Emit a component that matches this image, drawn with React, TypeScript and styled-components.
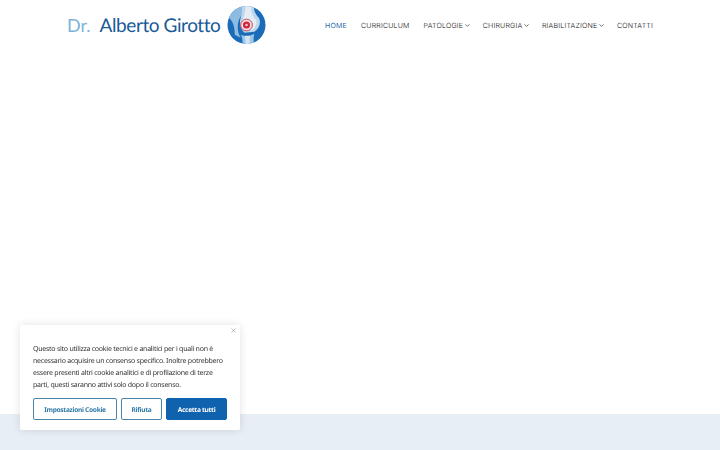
import React from "react";
import styled, { createGlobalStyle } from "styled-components";
import { ChevronDown, X } from "lucide-react";

const Global = createGlobalStyle`
  html, body {
    margin: 0;
    height: 100%;
    background: #fff;
  }
  body {
    font-family: "Noto Sans", sans-serif;
    text-rendering: geometricPrecision;
    overflow: hidden;
  }
`;

const Page = styled.div`
  display: flex;
  flex-direction: column;
  height: 450px;
`;

const Header = styled.header`
  display: flex;
  align-items: center;
  justify-content: space-between;
  height: 50px;
  padding: 0 66px 0 67px;
`;

const Logo = styled.a`
  display: flex;
  align-items: center;
  text-decoration: none;
  font-family: Lato, sans-serif;
  white-space: nowrap;
`;

const LogoDr = styled.span`
  font-size: 18px;
  color: #7db2d8;
  margin-right: 9px;
`;

const LogoName = styled.span`
  font-size: 19px;
  letter-spacing: -0.42px;
  color: #1a5a98;
  margin-right: 7px;
`;

const Nav = styled.nav`
  display: flex;
  align-items: center;
  gap: 12px;
  font-family: Inter, sans-serif;
`;

const NavItem = styled.a<{ active?: boolean }>`
  display: flex;
  align-items: center;
  padding: 0 1px;
  font-size: 7px;
  font-weight: ${(props) => (props.active ? 400 : 300)};
  letter-spacing: 0.2px;
  color: ${(props) => (props.active ? "#1f6ca8" : "#111")};
  white-space: nowrap;
`;

const Caret = styled(ChevronDown)`
  margin: 0 -2.5px 0 1px;
`;

const Spacer = styled.main`
  flex: 1;
`;

const Footer = styled.footer`
  height: 36px;
  background: #e8eef5;
`;

const CookieBox = styled.div`
  position: fixed;
  left: 20px;
  top: 325px;
  width: 220px;
  height: 105px;
  box-sizing: border-box;
  padding: 17px 13px 0;
  background: #fff;
  border-radius: 2px;
  box-shadow: 0 0 8px rgba(0, 0, 0, 0.12);
`;

const Close = styled.span`
  position: absolute;
  top: 2px;
  right: 3px;
  display: flex;
  color: #999;
`;

const CookieText = styled.p`
  margin: 2px 0 0;
  font-size: 7px;
  letter-spacing: -0.25px;
  line-height: 12px;
  color: #333;
  white-space: nowrap;
`;

const Buttons = styled.div`
  display: flex;
  gap: 4px;
  margin-top: 6px;
`;

const Button = styled.button<{ primary?: boolean; size: number }>`
  height: 22px;
  box-sizing: border-box;
  padding: 0;
  width: ${(props) => props.size}px;
  border-radius: 2px;
  border: 1px solid ${(props) => (props.primary ? "#0f62ad" : "#4a85a8")};
  background: ${(props) => (props.primary ? "#0f62ad" : "#fff")};
  color: ${(props) => (props.primary ? "#fff" : "#2f7ba8")};
  font-family: "Noto Sans", sans-serif;
  font-size: 6.6px;
  font-weight: 700;
  letter-spacing: -0.3px;
  text-rendering: geometricPrecision;
`;

function KneeMark() {
  return (
    <svg width="39" height="40" viewBox="0 0 40 40">
      <defs>
        <clipPath id="disc">
          <circle cx="20" cy="20" r="19.5" />
        </clipPath>
      </defs>
      <g clipPath="url(#disc)">
        <rect width="40" height="40" fill="#1a6cb8" />
        <path d="M1 12 C5 6 10 2 16 0 L22 4 C15 8 11 14 11 22 C11 26 12 30 14 33 L8 30 C8 22 6 15 1 12Z" fill="#8dbbe2" />
        <path d="M15 0 L28 0 C27 5 29 9 33 13 C35 18 33 24 28 27 L18 28 C14 24 12 19 14 13 C15 9 16 5 15 0Z" fill="#bcd6ec" />
        <path d="M19 1 L25 1 C24 6 26 11 30 15 C31 19 29 23 26 25 L19 25 C16 21 15 17 17 12 C18 8 19 5 19 1Z" fill="#e4ecf4" />
        <path d="M14 30 C18 32 23 32 28 29 C27 33 27 36 28 40 L16 40 C16 36 16 33 14 30Z" fill="#9dc5e6" />
        <path d="M18 31 L24 31 C23 34 23 37 24 40 L19 40 C19 37 19 34 18 31Z" fill="#d4e4f2" />
      </g>
      <circle cx="20" cy="20" r="6" fill="#f4dfe2" stroke="#c9485a" strokeWidth="1" />
      <circle cx="20" cy="20" r="3.6" fill="#d3213a" />
      <circle cx="20" cy="20" r="1.4" fill="#f2c4cb" />
    </svg>
  );
}

export default function App() {
  return (
    <Page>
      <Global />
      <Header>
        <Logo>
          <LogoDr>Dr.</LogoDr>
          <LogoName>Alberto Girotto</LogoName>
          <KneeMark />
        </Logo>
        <Nav>
          <NavItem active>HOME</NavItem>
          <NavItem>CURRICULUM</NavItem>
          <NavItem>
            PATOLOGIE
            <Caret size={7} />
          </NavItem>
          <NavItem>
            CHIRURGIA
            <Caret size={7} />
          </NavItem>
          <NavItem>
            RIABILITAZIONE
            <Caret size={7} />
          </NavItem>
          <NavItem>CONTATTI</NavItem>
        </Nav>
      </Header>
      <Spacer />
      <Footer />
      <CookieBox>
        <Close>
          <X size={7} />
        </Close>
        <CookieText>
          Questo sito utilizza cookie tecnici e analitici per i quali non è
          <br />
          necessario acquisire un consenso specifico. Inoltre potrebbero
          <br />
          essere presenti altri cookie analitici e di profilazione di terze
          <br />
          parti, questi saranno attivi solo dopo il consenso.
        </CookieText>
        <Buttons>
          <Button size={84}>Impostazioni Cookie</Button>
          <Button size={41}>Rifiuta</Button>
          <Button primary size={61}>
            Accetta tutti
          </Button>
        </Buttons>
      </CookieBox>
    </Page>
  );
}
